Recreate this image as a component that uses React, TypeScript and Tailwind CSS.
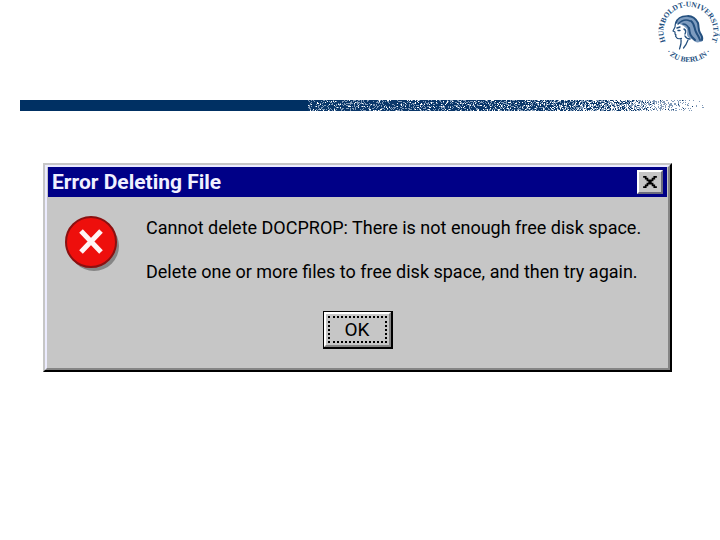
const BAR_WIDTH = 686;
const BAR_HEIGHT = 11;
const SOLID_WIDTH = 288;

// [position along the fade, share of dark cells, share of mid cells]
const FADE_STOPS = [
  [0, 0.7, 0.26],
  [0.3, 0.7, 0.22],
  [0.5, 0.6, 0.28],
  [0.65, 0.48, 0.36],
  [0.78, 0.26, 0.38],
  [0.88, 0.05, 0.38],
  [0.96, 0.02, 0.12],
  [1, 0, 0.02],
];

// Small seeded generator so the grain is the same on every render
const createRandom = (seed: number) => () => {
  seed = (seed * 1664525 + 1013904223) % 4294967296;
  return seed / 4294967296;
};

const getShares = (t: number) => {
  const next = Math.max(1, FADE_STOPS.findIndex(stop => stop[0] >= t));
  const a = FADE_STOPS[next - 1];
  const b = FADE_STOPS[next];
  const k = (t - a[0]) / (b[0] - a[0]);
  return { dark: a[1] + (b[1] - a[1]) * k, mid: a[2] + (b[2] - a[2]) * k };
};

const buildGrain = () => {
  const random = createRandom(1810);
  let dark = '';
  let mid = '';
  for (let x = SOLID_WIDTH; x < BAR_WIDTH; x++) {
    const { dark: darkShare, mid: midShare } = getShares((x - SOLID_WIDTH) / (BAR_WIDTH - SOLID_WIDTH));
    for (let y = 0; y < BAR_HEIGHT; y++) {
      const value = random();
      const cell = `M${x} ${y}h1v1h-1z`;
      if (value < darkShare) dark += cell;
      else if (value < darkShare + midShare) mid += cell;
    }
  }
  return { dark, mid };
};

const grain = buildGrain();

function UniversityLogo() {
  return (
    <svg viewBox="0 0 64 64" className="h-16 w-16 text-[#24507f]" role="img" aria-label="Humboldt-Universität zu Berlin">
      <defs>
        <path id="ring-top" d="M15 49.500A25 25 0 1 1 50 49.500" />
        <path id="ring-bottom" d="M5 44A30 30 0 0 0 60 44" />
      </defs>
      <g fill="currentColor" fontFamily="'Liberation Serif', serif" fontWeight="700" fontSize="7.5">
        <text>
          <textPath href="#ring-top" startOffset="50%" textAnchor="middle">HUMBOLDT-UNIVERSITÄT</textPath>
        </text>
        <text>
          <textPath href="#ring-bottom" startOffset="50%" textAnchor="middle">· ZU BERLIN ·</textPath>
        </text>
      </g>
      <path
        d="M20 23c1-4 5-7 11-7 5 0 8 2 10 5 2 4 2 7 3 11 1 3 3 4 3 7 0 2-1 3-3 3-3 1-5 0-7-2-3-2-5-2-6-5 0-3 1-5-1-7-3-3-6-4-10-5z"
        fill="#7e9cbf"
      />
      <g fill="none" stroke="currentColor" strokeLinecap="round" strokeLinejoin="round">
        <path strokeWidth="1.200" d="M20 22c-1 2-1 4-1 5l-2 4 2 1v2l1 1-.5 1.200 1 1.200c1 2 3 1.500 5 1M25 39c.5 3 0 6-1.500 10M32 40c-1 3-2 5-4.500 8" />
        <path strokeWidth="1.600" d="M20 23c1-4 5-7 11-7M22 24c4-4 8-5 12-3M27 24c3 0 5 2 6 5" />
        <path strokeWidth="2" d="M32 16c5 0 8 3 10 7 1 4 0 7 2 10s3 4 2 7M35 21c4 3 3 7 5 11s3 5 4 8M33 28c1 4 0 6 3 9l3 3" />
        <path strokeWidth="1.400" d="M21 28l3-1M22 30.500h2M28 29c2 1 2 3 1 5M29 36c1 2 3 3 5 3" />
      </g>
    </svg>
  );
}

function HeaderBar() {
  return (
    <svg
      viewBox={`0 0 ${BAR_WIDTH} ${BAR_HEIGHT}`}
      preserveAspectRatio="none"
      shapeRendering="crispEdges"
      className="block h-[11px] w-full"
      aria-hidden="true"
    >
      <rect width={SOLID_WIDTH} height={BAR_HEIGHT} fill="#003063" />
      <path d={grain.dark} fill="#0a376a" />
      <path d={grain.mid} fill="#839cb9" />
    </svg>
  );
}

function ErrorIcon() {
  return (
    <svg viewBox="0 0 56 56" className="h-14 w-14 shrink-0" aria-hidden="true">
      <circle cx="29" cy="30" r="25" fill="#858585" />
      <circle cx="26" cy="26" r="25" fill="#ee0f0c" stroke="#8b1010" strokeWidth="2" />
      <path d="M16 15l20 21M36 15L16 36" stroke="#fff4f4" strokeWidth="5" />
    </svg>
  );
}

function ErrorDialog() {
  return (
    <section
      role="alertdialog"
      aria-labelledby="dialog-title"
      aria-describedby="dialog-message"
      className="border-2 border-t-[#c6c6c6] border-r-black border-b-black border-l-[#c6c6c6] bg-[#c6c6c6]"
    >
      <div className="border-2 border-t-[#ececff] border-r-[#858585] border-b-[#858585] border-l-[#ececff] px-px">
        <header className="flex h-[30px] items-center justify-between bg-[#000087] px-1">
          <h1 id="dialog-title" className="text-[21px] leading-6 font-bold text-[#f0f0ff]">Error Deleting File</h1>
          <button
            type="button"
            aria-label="Close"
            className="flex h-6 w-[26px] items-center justify-center border-2 border-t-white border-r-[#6c6c7c] border-b-[#6c6c7c] border-l-white bg-[#c6c6c6]"
          >
            <svg viewBox="0 0 8 7" className="h-3 w-3.5" aria-hidden="true">
              <path
                d="M0 0h2v1h1v1h2V1h1V0h2v1H7v1H6v1H5v1h1v1h1v1h1v1H6V6H5V5H3v1H2v1H0V6h1V5h1V4h1V3H2V2H1V1H0z"
                fill="#000"
              />
            </svg>
          </button>
        </header>
        <div className="flex items-start gap-[25px] px-[17px] pt-[19px]">
          <ErrorIcon />
          <div id="dialog-message" className="flex flex-col gap-5 text-[18px] leading-6 whitespace-nowrap text-black">
            <p>Cannot delete DOCPROP: There is not enough free disk space.</p>
            <p>Delete one or more files to free disk space, and then try again.</p>
          </div>
        </div>
        <div className="flex justify-center pt-[27px] pb-[19px]">
          <button
            type="button"
            className="h-[38px] w-[70px] border border-r-2 border-b-2 border-black bg-[#c6c6c6] text-[19px] leading-6 text-black"
          >
            <span className="flex h-full items-center justify-center border-2 border-t-white border-r-[#858585] border-b-[#858585] border-l-white p-0.5">
              <span className="flex h-full w-full items-center justify-center border-2 border-dotted border-black">OK</span>
            </span>
          </button>
        </div>
      </div>
    </section>
  );
}

export default function App() {
  return (
    <div className="min-h-screen bg-white font-['Roboto',sans-serif]">
      <div className="flex justify-end">
        <UniversityLogo />
      </div>
      <div className="pt-9 pr-3.5 pl-5">
        <HeaderBar />
      </div>
      <main className="pt-[52px] pr-12 pl-[43px]">
        <ErrorDialog />
      </main>
    </div>
  );
}
